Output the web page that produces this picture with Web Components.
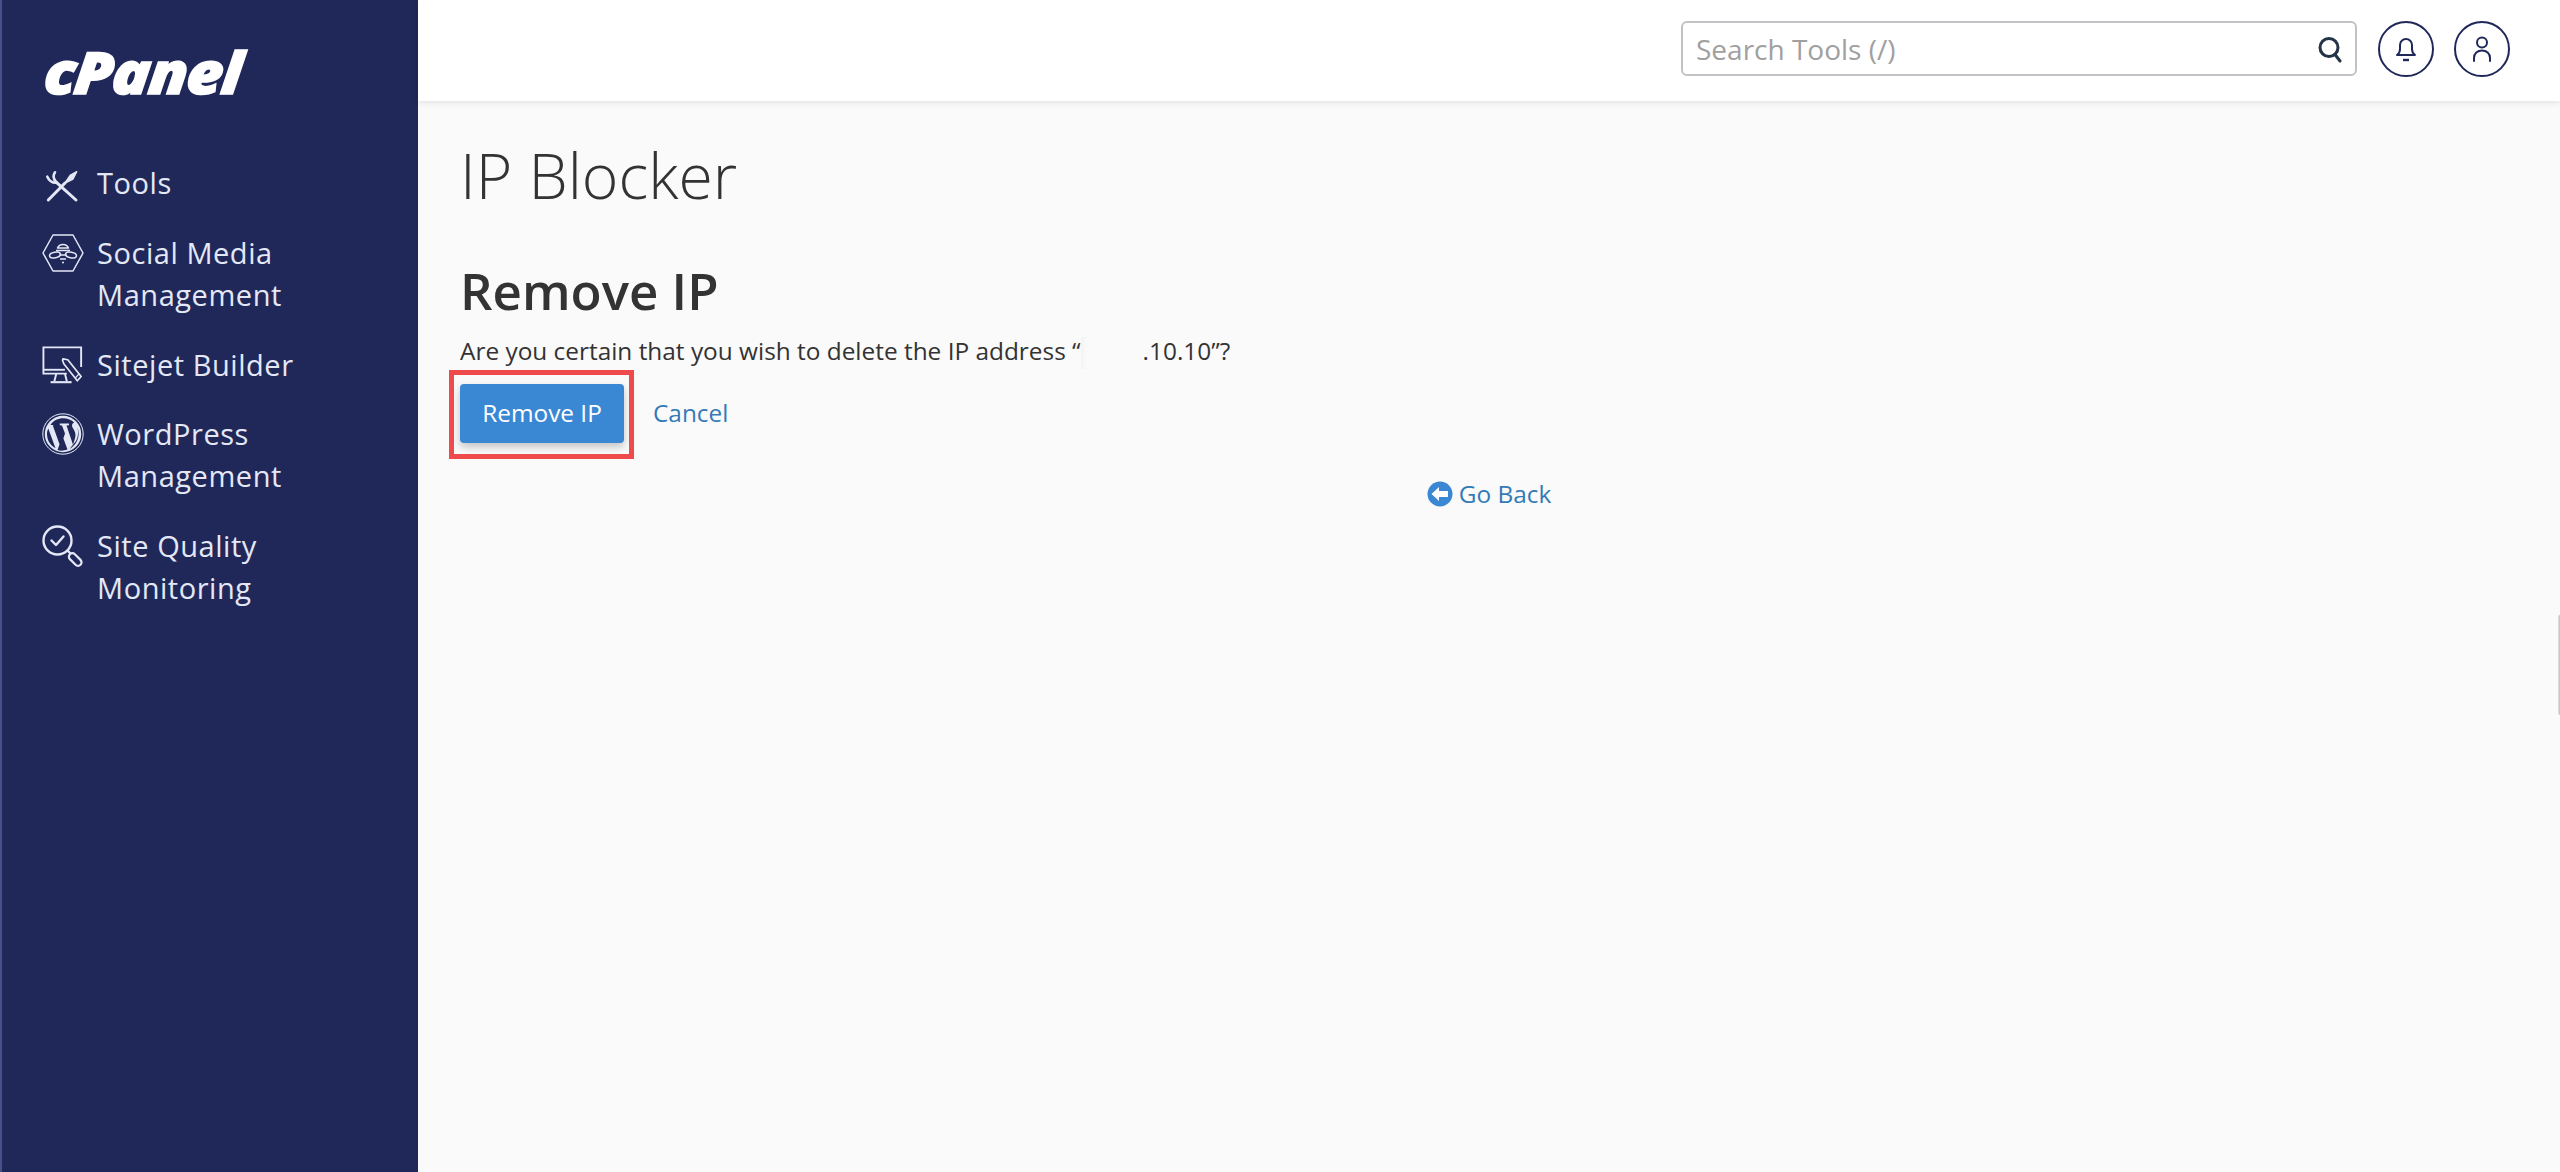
<!DOCTYPE html>
<html lang="en">
<head>
<meta charset="utf-8">
<title>IP Blocker</title>
<style>
html, body { margin: 0; height: 100%; overflow: hidden; }
body { font-family: "Open Sans", "Liberation Sans", sans-serif; color: #333; background: #fafafa; }
</style>
</head>
<body>
<cp-app>
  <cp-sidebar slot="side">
    <cp-nav-item icon="tools">Tools</cp-nav-item>
    <cp-nav-item icon="social">Social Media<br>Management</cp-nav-item>
    <cp-nav-item icon="sitejet">Sitejet Builder</cp-nav-item>
    <cp-nav-item icon="wp">WordPress<br>Management</cp-nav-item>
    <cp-nav-item icon="quality">Site Quality<br>Monitoring</cp-nav-item>
  </cp-sidebar>
  <cp-topbar slot="top"></cp-topbar>
  <cp-remove-page></cp-remove-page>
</cp-app>

<script>
const ICONS = {
  tools: `<svg width="42" height="42" viewBox="0 0 42 42" fill="none" stroke="currentColor" stroke-linecap="round" stroke-linejoin="round">
    <g transform="translate(0 7)">
    <path d="M14.700 13.700 L34 31" stroke-width="3"/>
    <path d="M14.700 13.700 C11 10 11 6 13 3.300" stroke-width="2.600"/>
    <path d="M14.700 13.700 C10.500 14 7 11.500 5.300 7.700" stroke-width="2.600"/>
    <path d="M23 14 L6.300 31" stroke-width="3"/>
    <path d="M23 14 L28.500 6 L34.700 2.700 L31 10 Z" fill="currentColor" stroke-width="1.400"/>
    </g></svg>`,
  social: `<svg width="42" height="38" viewBox="0 0 42 38" fill="none" stroke="currentColor" stroke-width="1.500" stroke-linejoin="round">
    <path d="M11 1 H31 L41 19 L31 37 H11 L1 19 Z"/>
    <path d="M15.500 14 A6 6 0 0 1 26.500 14 Z"/><path d="M14 16.500 H28"/>
    <ellipse cx="13" cy="21" rx="5.500" ry="2.800" transform="rotate(-12 13 21)"/><ellipse cx="29" cy="21" rx="5.500" ry="2.800" transform="rotate(12 29 21)"/>
    <path d="M17.500 21 H24.500"/><path d="M18 25 H24"/><path d="M20 28.500 H22"/></svg>`,
  sitejet: `<svg width="44" height="40" viewBox="0 0 44 40" fill="none" stroke="currentColor" stroke-width="2">
    <path d="M26 29 H1.500 V1.500 H41 V22"/><path d="M1.500 25 H24" /><path d="M15 29 L13 37"/><path d="M24 29 L26 37"/><path d="M9 38 H31" stroke-width="2.200"/>
    <path d="M21.500 15 L22 13.500 L27 14.500 L41 32 L37 36.500 L23 19 Z" stroke-width="1.800" stroke-linejoin="round"/><path d="M39 29 L35 33.500" stroke-width="1.400"/></svg>`,
  wp: `<svg width="42" height="42" viewBox="0 0 42 42"><circle cx="21" cy="21" r="20.200" fill="none" stroke="currentColor" stroke-width="1"/>
    <circle cx="21" cy="21" r="18.200" fill="currentColor"/>
    <path fill="#20285a" d="M5 21 C5 27.500 8.500 32.500 13.500 35.200 L6.300 15.500 C5.500 17 5 19 5 21 Z M20.500 23 L15.500 37 C18.700 38 22.300 37.800 25.500 36.600 Z M24.500 12.500 L31 31.800 L32.900 25.800 C34 22 33.500 19.500 32 17 C31 15.300 30 14 30 12.500 C30 11 31 10 32.300 9.800 C27 3.800 14 3 8.500 12 L12 12 L10.800 12.500 L18.500 34 L23 20.600 L20 12.500 L17.800 12.200 L17.800 10.600 L27 10.600 L27 12.200 Z M35.500 14.500 C36.800 19.500 36 24 34 28 L27.500 36 C34 32.500 39 24 35.500 14.500 Z"/></svg>`,
  quality: `<svg width="42" height="42" viewBox="0 0 42 42" fill="none" stroke="currentColor">
    <circle cx="15.500" cy="15.500" r="14" stroke-width="2.400"/><path d="M9.500 15.500 L14 20 L21.500 11.500" stroke-width="2.400" stroke-linecap="round" stroke-linejoin="round"/>
    <path d="M25.500 25.500 L28.500 28.500" stroke-width="2.400"/><rect x="25.700" y="31" width="15" height="7" rx="3.500" transform="rotate(45 33.200 34.500)" stroke-width="2.200"/></svg>`
};

class CpApp extends HTMLElement {
  constructor() {
    super();
    this.attachShadow({mode: 'open'}).innerHTML = `
    <style>
      :host { display: grid; grid-template-columns: 418px 1fr; height: 1172px; width: 2560px; position: relative; overflow: hidden; }
      .main { display: flex; flex-direction: column; min-width: 0; }
      .edge { position: absolute; right: 0; top: 615px; width: 2px; height: 100px; background: linear-gradient(to right, #e4e4e4, #bdbdbd); border-radius: 2px 0 0 2px; }
    </style>
    <slot name="side"></slot>
    <div class="main"><slot name="top"></slot><slot></slot></div>
    <div class="edge"></div>`;
  }
}

class CpSidebar extends HTMLElement {
  constructor() {
    super();
    this.attachShadow({mode: 'open'}).innerHTML = `
    <style>
      :host { display: block; background: #20285a; border-left: 2px solid #46508a; box-sizing: border-box; padding: 0 0 0 40px; }
      .logo { height: 50px; margin: 47px 0 65px; color: #fff; font: italic 800 58px/50px "Open Sans", sans-serif; letter-spacing: -1.500px; -webkit-text-stroke: 1.500px #fff; transform: skewX(-6deg) scale(1.09, 1); transform-origin: left bottom; }
      nav { display: flex; flex-direction: column; gap: 27.750px; }
    </style>
    <div class="logo">cPanel</div>
    <nav><slot></slot></nav>`;
  }
}

class CpNavItem extends HTMLElement {
  constructor() {
    super();
    const icon = ICONS[this.getAttribute('icon')];
    this.attachShadow({mode: 'open'}).innerHTML = `
    <style>
      :host { display: grid; grid-template-columns: 42px 1fr; column-gap: 13px; color: #e4e8f6; font: 400 29px/42px "Open Sans", sans-serif; letter-spacing: .55px; }
      .ic { height: 42px; display: flex; align-items: center; }
      svg { display: block; }
    </style>
    <div class="ic">${icon}</div>
    <div><slot></slot></div>`;
  }
}

class CpSearch extends HTMLElement {
  constructor() {
    super();
    this.attachShadow({mode: 'open'}).innerHTML = `
    <style>
      :host { display: flex; align-items: center; box-sizing: border-box; width: 676px; height: 55px; background: #fff; border: 2px solid #c2c2c6; border-radius: 6px; padding: 0 12px 0 13px; justify-content: space-between; }
      span { color: #a0a0a0; font: 400 28px/1 "Open Sans", sans-serif; }
      svg { display: block; }
    </style>
    <span>Search Tools (/)</span>
    <svg width="26" height="28" viewBox="0 0 26 28" fill="none" stroke="#243447" stroke-width="3"><circle cx="12" cy="12.500" r="9"/><path d="M18 19.500 L23 26" stroke-linecap="round"/></svg>`;
  }
}

class CpRoundButton extends HTMLElement {
  constructor() {
    super();
    this.attachShadow({mode: 'open'}).innerHTML = `
    <style>
      :host { display: flex; align-items: center; justify-content: center; box-sizing: border-box; width: 56px; height: 56px; border: 2px solid #20285a; border-radius: 50%; background: #fff; }
    </style>
    <slot></slot>`;
  }
}

class CpTopbar extends HTMLElement {
  constructor() {
    super();
    this.attachShadow({mode: 'open'}).innerHTML = `
    <style>
      :host { display: flex; align-items: center; justify-content: flex-end; gap: 20px; box-sizing: border-box; height: 101px; padding: 0 48px 4px 0; background: #fff; box-shadow: 0 2px 6px rgba(0,0,0,.09); position: relative; }
      cp-search { margin-right: 1px; }
      cp-round-button:last-child { margin-right: 2px; }
      svg { display: block; }
    </style>
    <cp-search></cp-search>
    <cp-round-button><svg width="22" height="26" viewBox="0 0 22 26" fill="none" stroke="#20285a" stroke-width="2"><path d="M2 19 C4.500 17.500 5 16 5 13 V9 A6 6 0 0 1 17 9 V13 C17 16 17.500 17.500 20 19 Z" stroke-linejoin="round"/><path d="M8 24 H14" stroke-width="2.400"/></svg></cp-round-button>
    <cp-round-button><svg width="22" height="28" viewBox="0 0 22 28" fill="none" stroke="#20285a" stroke-width="2"><circle cx="11" cy="7.500" r="5"/><path d="M3 26 V23 C3 18.500 6.500 15.500 11 15.500 C15.500 15.500 19 18.500 19 23 V26" stroke-linecap="round"/></svg></cp-round-button>`;
  }
}

class CpRemovePage extends HTMLElement {
  constructor() {
    super();
    this.attachShadow({mode: 'open'}).innerHTML = `
    <style>
      :host { display: block; padding: 0 0 0 42px; color: #333; font-family: "Open Sans", sans-serif; }
      h1 { margin: 34px 0 0; font: 300 62.500px/80px "Open Sans", sans-serif; }
      h2 { margin: 40px 0 0; font: 600 51px/70px "Open Sans", sans-serif; }
      p { margin: 8px 0 0; font: 400 24.400px/36px "Open Sans", sans-serif; }
      .blur { display: inline-block; width: 62px; height: 32px; vertical-align: middle; box-shadow: inset 5px 0 6px -5px #ececec; }
      .actions { display: flex; align-items: center; margin-top: 15px; height: 58px; }
      .btn { position: relative; box-sizing: border-box; width: 164px; height: 59px; display: flex; align-items: center; justify-content: center; background: #3a87d3; color: #fff; border-radius: 4px; font: 400 24.400px/1 "Open Sans", sans-serif; box-shadow: 0 4px 8px rgba(0,0,0,.22); }
      .mark { position: absolute; left: -11px; top: -14px; right: -10px; bottom: -16px; border: 5px solid #ef4b4c; pointer-events: none; }
      a { color: #337ab7; text-decoration: none; font: 400 24.400px/1 "Open Sans", sans-serif; }
      .cancel { margin-left: 29px; }
      .back { display: flex; align-items: center; justify-content: center; gap: 6px; margin: 34px 0 0 -42px; height: 36px; }
      svg { display: block; }
    </style>
    <h1>IP Blocker</h1>
    <h2>Remove IP</h2>
    <p>Are you certain that you wish to delete the IP address “<span class="blur"></span>.10.10”?</p>
    <div class="actions">
      <div class="btn">Remove IP<div class="mark"></div></div>
      <a class="cancel">Cancel</a>
    </div>
    <div class="back">
      <svg width="26" height="26" viewBox="0 0 26 26"><circle cx="13" cy="13" r="12.500" fill="#3a87d3"/><path fill="#fff" d="M4.500 13 L12 6 V10 H21 V16 H12 V20 Z"/></svg>
      <a>Go Back</a>
    </div>`;
  }
}

customElements.define('cp-app', CpApp);
customElements.define('cp-sidebar', CpSidebar);
customElements.define('cp-nav-item', CpNavItem);
customElements.define('cp-search', CpSearch);
customElements.define('cp-round-button', CpRoundButton);
customElements.define('cp-topbar', CpTopbar);
customElements.define('cp-remove-page', CpRemovePage);
</script>
</body>
</html>
